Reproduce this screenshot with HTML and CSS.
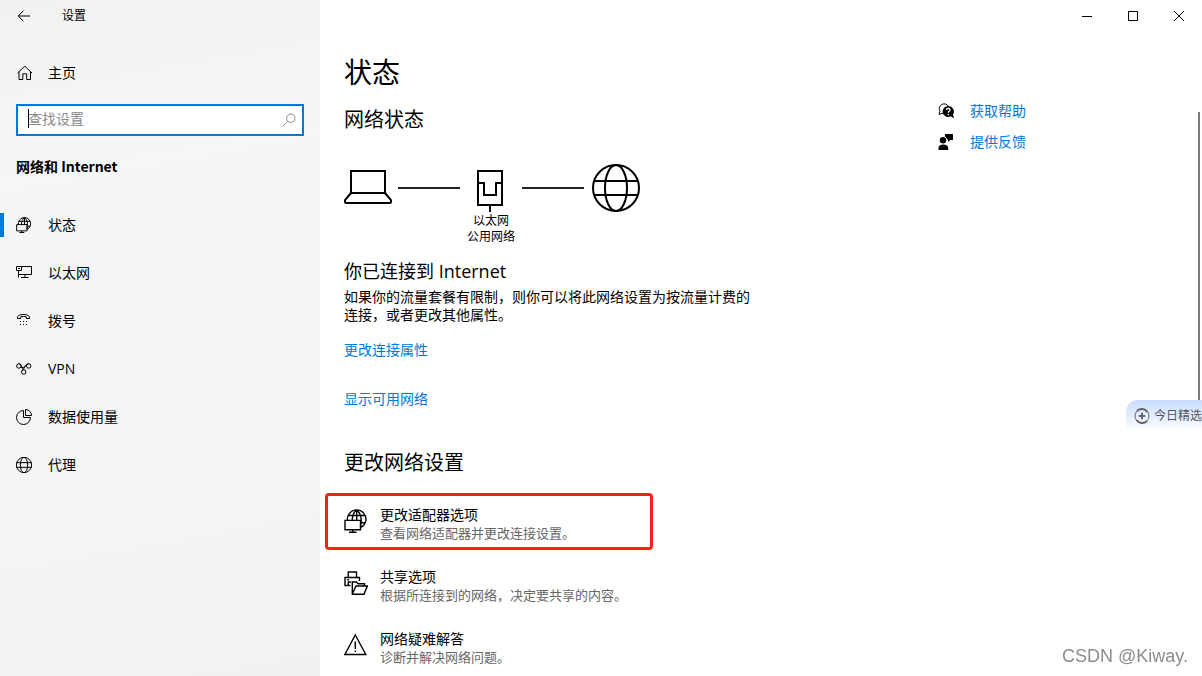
FILE: index.html
```
<!DOCTYPE html>
<html lang="zh-CN">
<head>
  <meta charset="UTF-8">
  <meta name="viewport" content="width=device-width, initial-scale=1.0">
  <title>设置</title>
  <link rel="stylesheet" href="styles.css">
</head>
<body>

<!-- Shared icons -->
<svg class="sprite" aria-hidden="true">
  <symbol id="globe-monitor" viewBox="0 0 24 24">
    <path d="M3.4 11.2A9.3 9.3 0 1 1 17 18.4M12.7 1C9.5 3.5 8.3 7 8.2 11.2M12.7 1C16.5 4 17.4 8 17.2 12.5Q17 16 16.4 18.2M12.7 1V11.2M4.3 6.5H21M17 13.8H21.2"/>
    <path d="M1 11.4H16.5V20.8H1zM8.7 20.8V23.3M5 23.3H12.5"/>
  </symbol>
  <symbol id="globe" viewBox="0 0 48 48">
    <circle cx="24" cy="24" r="23"/>
    <ellipse cx="24" cy="24" rx="11" ry="23"/>
    <path d="M2 17H46M2 31H46"/>
  </symbol>
</svg>

<!-- Sidebar -->
<aside class="sidebar">
  <div class="titlebar">
    <button class="back" aria-label="返回">
      <svg width="14" height="12" viewBox="0 0 14 12"><path d="M6.5 .7L1.2 6L6.5 11.3M1.2 6H13"/></svg>
    </button>
    <span class="app-name">设置</span>
  </div>

  <a href="#" class="nav-item home">
    <svg class="icon" viewBox="0 0 16 16"><path d="M1.5 8L8.8 1.2L16 8M3 6.8V14.5H6.8V8.8H10.7V14.5H14.5V6.8"/></svg>
    <span>主页</span>
  </a>

  <div class="search">
    <input type="text" id="search" placeholder="查找设置" aria-label="查找设置">
    <span class="caret"></span>
    <svg class="search-icon" width="14" height="14" viewBox="0 0 14 14"><circle cx="8.8" cy="5.2" r="4.2"/><path d="M5.8 8.2L.8 13.2"/></svg>
  </div>

  <h2 class="group-title">网络和 Internet</h2>

  <nav>
    <a href="#" class="nav-item active">
      <svg class="icon scaled"><use href="#globe-monitor"/></svg>
      <span>状态</span>
    </a>
    <a href="#" class="nav-item">
      <svg class="icon" viewBox="0 0 16 16"><path d="M.5 1.5H5.5V5.5H.5zM5.5 1.5H15.5V9.5H2.5V5.5M2.5 9.5V12.5M9 9.5V12.5M5 12.5H12.5M2 3.5H4"/></svg>
      <span>以太网</span>
    </a>
    <a href="#" class="nav-item">
      <svg class="icon" viewBox="0 0 16 16"><path d="M1.5 5.5Q.8 1.5 7.5 1.5Q14.2 1.5 13.5 5.5H10.3V3.8Q7.5 3 4.7 3.8V5.5z"/><path class="solid" d="M4 8h1v1H4zM7 8h1v1H7zM10 8h1v1h-1zM4 11h1v1H4zM7 11h1v1H7zM10 11h1v1h-1z"/></svg>
      <span>拨号</span>
    </a>
    <a href="#" class="nav-item">
      <svg class="icon" viewBox="0 0 16 16"><circle cx="2.8" cy="5" r="2.2"/><circle cx="12.7" cy="5" r="2.2"/><circle cx="7.7" cy="11" r="2.2"/><path d="M2.8 2.8C6.5 2.8 5.2 7.6 8.2 8.8M12.7 2.8C8.8 2.8 9.6 7 5.8 9.8M4.5 6.6Q7 8 10.8 3.8"/></svg>
      <span>VPN</span>
    </a>
    <a href="#" class="nav-item">
      <svg class="icon" viewBox="0 0 16 16"><path d="M7.5 1.5A7 7 0 1 0 14.5 8.5H7.5zM9.5 .5V6.5H15.5A6 6 0 0 0 9.5 .5z"/></svg>
      <span>数据使用量</span>
    </a>
    <a href="#" class="nav-item">
      <svg class="icon scaled-globe"><use href="#globe"/></svg>
      <span>代理</span>
    </a>
  </nav>
</aside>

<!-- Content -->
<main class="main">
  <div class="window-controls">
    <button aria-label="最小化"><svg width="10" height="10" viewBox="0 0 10 10"><path d="M0 5.5H10"/></svg></button>
    <button aria-label="最大化"><svg width="10" height="10" viewBox="0 0 10 10"><path d="M.5 .5H9.5V9.5H.5z"/></svg></button>
    <button aria-label="关闭"><svg width="10" height="10" viewBox="0 0 10 10"><path d="M0 0L10 10M10 0L0 10"/></svg></button>
  </div>

  <div class="columns">
    <section class="content">
      <h1>状态</h1>
      <h2>网络状态</h2>

      <div class="diagram">
        <svg class="laptop" width="48" height="48" viewBox="0 0 48 48"><path d="M7 7H41V29H7zM7 29L1 36V38Q1 39 2 39H46Q47 39 47 38V36L41 29"/></svg>
        <span class="wire"></span>
        <div class="adapter">
          <svg width="28" height="48" viewBox="0 0 28 48"><path d="M1 7H25V41H1zM1 19H7V31H19V19H25M13 41V48"/></svg>
          <span>以太网</span>
          <span>公用网络</span>
        </div>
        <span class="wire"></span>
        <svg class="world" width="48" height="48"><use href="#globe"/></svg>
      </div>

      <h3>你已连接到 Internet</h3>
      <p class="desc">如果你的流量套餐有限制，则你可以将此网络设置为按流量计费的连接，或者更改其他属性。</p>
      <a href="#" class="link">更改连接属性</a>
      <a href="#" class="link">显示可用网络</a>

      <h2 class="change">更改网络设置</h2>
      <ul class="options">
        <li>
          <a href="#" class="option highlight">
            <svg width="24" height="24"><use href="#globe-monitor"/></svg>
            <span class="option-text">
              <span class="option-title">更改适配器选项</span>
              <span class="option-desc">查看网络适配器并更改连接设置。</span>
            </span>
          </a>
        </li>
        <li>
          <a href="#" class="option">
            <svg width="24" height="24" viewBox="0 0 24 24"><path d="M4.3 6.5V1H12.5V6.5M6.5 14.5H1V6.5H15.5V10M4.3 14.5V11H7M3.3 8.8H5M8.3 20V11H12.5L14 12.7H20.5V15M8.3 23L12 15H23.3L20 23.3H8.3V15"/></svg>
            <span class="option-text">
              <span class="option-title">共享选项</span>
              <span class="option-desc">根据所连接到的网络，决定要共享的内容。</span>
            </span>
          </a>
        </li>
        <li>
          <a href="#" class="option">
            <svg width="24" height="24" viewBox="0 0 24 24"><path d="M11.3 2L21.8 21.5H.9zM11.3 8.5V16M11.3 17.6V19"/></svg>
            <span class="option-text">
              <span class="option-title">网络疑难解答</span>
              <span class="option-desc">诊断并解决网络问题。</span>
            </span>
          </a>
        </li>
      </ul>
    </section>

    <!-- Help links -->
    <aside class="help">
      <a href="#" class="help-link">
        <svg width="16" height="16" viewBox="0 0 16 16">
          <path class="outline" d="M5 10.3L1 11.3L2 8.3A4.9 4.9 0 1 1 10.4 3.2"/>
          <path d="M10.4 3A5.5 5.5 0 1 0 12.8 13.3L16 15.5L15 11.5A5.5 5.5 0 0 0 10.4 3z"/>
          <path class="mark" d="M8.5 7Q8.6 5.3 10.4 5.4Q12.2 5.6 12 7.2Q11.8 8 10.9 8.5Q10.4 8.9 10.4 9.8M10.4 11V12.2"/>
        </svg>
        <span>获取帮助</span>
      </a>
      <a href="#" class="help-link">
        <svg width="16" height="16" viewBox="0 0 16 16">
          <circle cx="5" cy="6.3" r="3.2"/>
          <path d="M.5 16V14Q.5 10.5 5.2 10.5Q10.2 10.5 10.2 14V16zM7 0H15V6H12.5L10 8V5.8L9.2 5.5Q8.7 3.7 7 2.5z"/>
        </svg>
        <span>提供反馈</span>
      </a>
    </aside>
  </div>
</main>

<div class="scrollbar"></div>

<a href="#" class="daily">
  <svg width="16" height="16" viewBox="0 0 16 16"><circle cx="8" cy="8" r="7"/><path class="thick" d="M3 3A7 7 0 0 1 13.5 4M13 13A7 7 0 0 1 2.5 12M8 4.8V11.2M4.8 8H11.2"/></svg>
  <span>今日精选</span>
</a>

<span class="watermark">CSDN @Kiway.</span>

</body>
</html>
```
FILE: styles.css
```
* {
  box-sizing: border-box;
}

body {
  display: flex;
  min-height: 100vh;
  margin: 0;
  overflow: hidden;
  background-color: #fff;
  color: #000;
  font-family: "Open Sans", "Noto Sans CJK SC", sans-serif;
  font-size: 14px;
  line-height: 20px;
}

h1, h2, h3, p, ul {
  margin: 0;
  padding: 0;
  font-weight: normal;
}

a {
  color: inherit;
  text-decoration: none;
}

button {
  display: flex;
  align-items: center;
  justify-content: center;
  height: 32px;
  padding: 0;
  border: 0;
  background: none;
}

svg {
  flex-shrink: 0;
  fill: none;
  stroke: #000;
}

.sprite {
  position: absolute;
  width: 0;
  height: 0;
}

/* Sidebar */
.sidebar {
  flex: 0 0 320px;
  background: linear-gradient(170deg, #f1f1f1 0%, #f5f6f6 25%, #f3f4f6 50%, #f4f4f4 75%, #f1f1f1 100%);
}

.titlebar {
  display: flex;
  align-items: center;
  height: 32px;
}

.back {
  width: 48px;
}

.app-name {
  margin-left: 14px;
  font-size: 12px;
}

.nav-item {
  position: relative;
  display: flex;
  align-items: center;
  gap: 16px;
  height: 48px;
  padding-left: 16px;
}

.nav-item:hover {
  background-color: rgba(0, 0, 0, 0.05);
}

.home {
  margin-top: 17px;
}

.active::before {
  content: "";
  position: absolute;
  left: 0;
  width: 4px;
  height: 24px;
  background-color: #0078d7;
}

.icon {
  width: 16px;
  height: 16px;
}

.scaled {
  stroke-width: 1.5;
}

.scaled-globe {
  stroke-width: 3;
}

.solid {
  fill: #000;
  stroke: none;
}

.search {
  position: relative;
  margin: 7px 16px 0;
}

.search input {
  display: block;
  width: 100%;
  height: 32px;
  padding: 0 32px 4px 10px;
  border: 2px solid #0078d7;
  outline: none;
  background-color: #fff;
  font: inherit;
}

.search input::placeholder {
  color: #8a8a8a;
}

.caret {
  position: absolute;
  top: 5px;
  left: 12px;
  width: 1px;
  height: 19px;
  background-color: #000;
}

.search-icon {
  position: absolute;
  top: 9px;
  right: 8px;
  stroke: #8a8a8a;
}

.group-title {
  margin: 20px 16px 25px;
  font-family: "Noto Sans CJK SC", sans-serif;
  font-size: 14px;
  font-weight: bold;
  line-height: 20px;
}

/* Main area */
.main {
  flex: 1;
  min-width: 0;
}

.window-controls {
  display: flex;
  justify-content: flex-end;
}

.window-controls button {
  width: 46px;
}

.columns {
  display: flex;
}

.content {
  flex: 1;
  padding: 20px 0 0 24px;
}

h1 {
  font-size: 28px;
  line-height: 40px;
}

h2 {
  font-size: 20px;
  line-height: 28px;
}

.content h2 {
  margin-top: 14px;
}

.diagram {
  display: flex;
  align-items: flex-start;
  margin-top: 30px;
  stroke-width: 2;
}

.laptop {
  margin-right: 6px;
}

.world {
  margin-left: 8px;
}

.wire {
  width: 62px;
  height: 2px;
  margin-top: 23px;
  background-color: #222;
}

.adapter {
  display: flex;
  flex-direction: column;
  align-items: center;
  width: 62px;
  font-size: 12px;
  line-height: 16px;
}

.adapter svg {
  margin-bottom: 1px;
}

h3 {
  margin-top: 14px;
  font-size: 18px;
  line-height: 24px;
}

.desc {
  max-width: 410px;
  margin-top: 5px;
  line-height: 18px;
}

.link {
  display: table;
  margin-top: 16px;
  color: #0078d7;
}

.link + .link {
  margin-top: 29px;
}

.link:hover,
.help-link:hover {
  color: #666;
}

.content .change {
  margin-top: 40px;
}

.options {
  width: 328px;
  margin: 16px 0 0 -19px;
  list-style: none;
}

.option {
  display: flex;
  gap: 12px;
  margin-bottom: 5px;
  padding: 10px 16px 5px;
  border: 3px solid transparent;
  border-radius: 4px;
  line-height: 18px;
}

.option svg {
  margin-top: 3px;
  stroke-width: 1.4;
}

.highlight {
  border-color: #ff1e12;
}

.option-text {
  display: flex;
  flex-direction: column;
}

.option-desc {
  color: #666;
  font-size: 13px;
}

/* Help links */
.help {
  display: flex;
  flex-direction: column;
  gap: 11px;
  width: 264px;
  padding-top: 69px;
}

.help-link {
  display: flex;
  align-items: center;
  gap: 16px;
  color: #0078d7;
}

.help-link svg {
  fill: #000;
  stroke: none;
}

.help-link .outline {
  fill: none;
  stroke: #000;
}

.help-link .mark {
  fill: none;
  stroke: #fff;
  stroke-width: 1.3;
}

/* Overlays */
.scrollbar {
  position: fixed;
  top: 112px;
  right: 2px;
  width: 2px;
  height: 288px;
  background-color: #7a7a7a;
}

.daily {
  position: fixed;
  top: 400px;
  right: 0;
  display: flex;
  align-items: center;
  gap: 4px;
  height: 32px;
  padding-left: 8px;
  border-top-left-radius: 12px;
  background: linear-gradient(#c8dcff, #fff);
  color: #555;
  font-size: 12px;
}

.daily svg {
  stroke: #666;
}

.daily .thick {
  stroke-width: 2;
}

.watermark {
  position: fixed;
  right: 14px;
  bottom: 8px;
  color: #8c8c8c;
  font-family: "Liberation Sans", Arial, sans-serif;
  font-size: 18px;
  line-height: 24px;
}
```
